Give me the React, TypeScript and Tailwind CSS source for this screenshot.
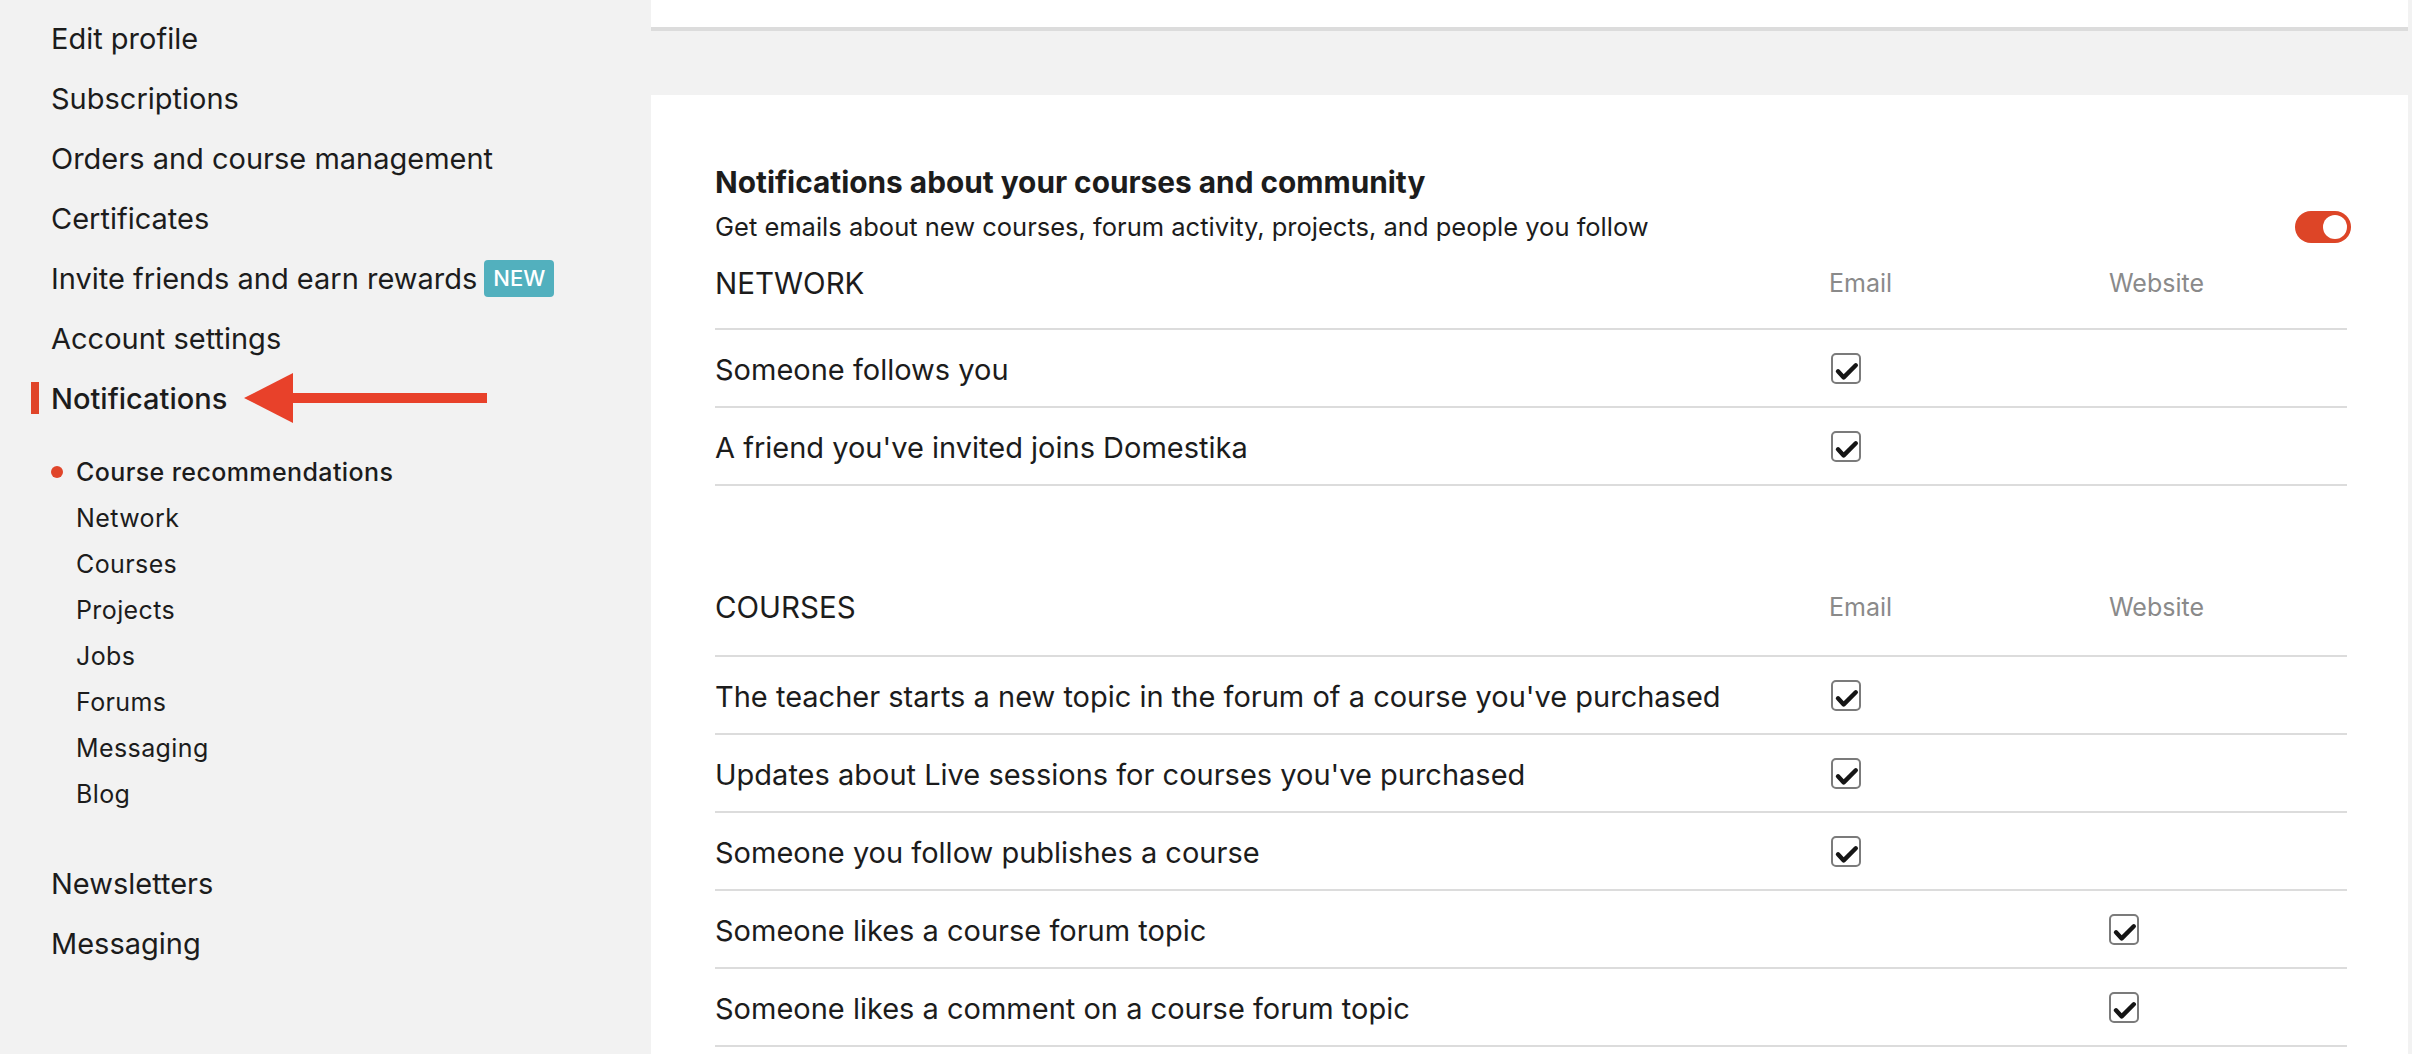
import React from "react";

const menu = [
  "Edit profile",
  "Subscriptions",
  "Orders and course management",
  "Certificates",
  "Invite friends and earn rewards",
  "Account settings",
  "Notifications",
];

const subMenu = [
  "Course recommendations",
  "Network",
  "Courses",
  "Projects",
  "Jobs",
  "Forums",
  "Messaging",
  "Blog",
];

type Row = { label: string; email?: boolean; web?: boolean };

const networkRows: Row[] = [
  { label: "Someone follows you", email: true },
  { label: "A friend you've invited joins Domestika", email: true },
];

const courseRows: Row[] = [
  { label: "The teacher starts a new topic in the forum of a course you've purchased", email: true },
  { label: "Updates about Live sessions for courses you've purchased", email: true },
  { label: "Someone you follow publishes a course", email: true },
  { label: "Someone likes a course forum topic", web: true },
  { label: "Someone likes a comment on a course forum topic", web: true },
];

const Checkbox = () => (
  <span className="block h-[31px] w-[30px] rounded-[5px] border-2 border-[#7b7b7b] bg-white">
    <svg className="h-full w-full" viewBox="0 0 26 27">
      <path
        d="M5 16.3 L10.7 22.4 L22.8 10.3"
        fill="none"
        stroke="#151515"
        strokeWidth="4.4"
        strokeLinecap="round"
        strokeLinejoin="round"
      />
    </svg>
  </span>
);

const Section = ({ title, rows, pb }: { title: string; rows: Row[]; pb: string }) => (
  <div>
    <div className={`grid grid-cols-[1114px_280px_1fr] items-center border-b-2 border-[#dcdcdc] ${pb}`}>
      <span className="text-[29.5px] leading-[34px] text-[#1c1c1c]">{title}</span>
      <span className="text-[25px] leading-[34px] text-[#8a8a8a]">Email</span>
      <span className="text-[25px] leading-[34px] text-[#8a8a8a]">Website</span>
    </div>
    {rows.map((r) => (
      <div
        key={r.label}
        className="grid h-[78px] grid-cols-[1114px_280px_1fr] items-center border-b-2 border-[#dcdcdc]"
      >
        <span className="pt-[4px] text-[29px] leading-[34px] text-[#1c1c1c]">{r.label}</span>
        <span className="pl-[2px]">{r.email && <Checkbox />}</span>
        <span>{r.web && <Checkbox />}</span>
      </div>
    ))}
  </div>
);

export default function App() {
  return (
    <div
      className="flex h-[1054px] w-full overflow-hidden bg-[#f2f2f2]"
      style={{ fontFamily: "Inter, 'Noto Sans', sans-serif" }}
    >
      <aside className="w-[651px] shrink-0 pt-[8px]">
        {menu.map((item) => (
          <div key={item} className="relative flex h-[60px] items-center pl-[51px]">
            {item === "Notifications" && (
              <span className="absolute left-[31px] top-[14px] h-[32px] w-[8px] bg-[#e0452a]" />
            )}
            <span
              className={`text-[29px] leading-none text-[#1c1c1c] ${
                item === "Notifications" ? "font-medium" : ""
              }`}
            >
              {item}
            </span>
            {item.startsWith("Invite") && (
              <span className="ml-[7px] flex h-[37px] w-[70px] items-center justify-center rounded-[4px] bg-[#52b0be] text-[22px] font-medium text-white">
                NEW
              </span>
            )}
            {item === "Notifications" && (
              <svg className="ml-[17px]" width="243" height="50" viewBox="0 0 243 50">
                <polygon points="0,25 49,0 49,50" fill="#e8412a" />
                <rect x="48" y="20" width="195" height="10" fill="#e8412a" />
              </svg>
            )}
          </div>
        ))}

        <div className="mt-[21px]">
          {subMenu.map((s, i) => (
            <div key={s} className="flex h-[46px] items-center pl-[51px]">
              <span
                className={`mr-[13px] h-[12px] w-[12px] rounded-full ${i === 0 ? "bg-[#e0452a]" : ""}`}
              />
              <span
                className={`text-[25px] leading-none tracking-[0.4px] text-[#1c1c1c] ${
                  i === 0 ? "font-medium" : ""
                }`}
              >
                {s}
              </span>
            </div>
          ))}
        </div>

        <div className="mt-[36px]">
          {["Newsletters", "Messaging"].map((item) => (
            <div key={item} className="flex h-[60px] items-center pl-[51px]">
              <span className="text-[29px] leading-none text-[#1c1c1c]">{item}</span>
            </div>
          ))}
        </div>
      </aside>

      <main className="flex min-w-0 flex-1 flex-col pr-[4px]">
        <div className="h-[31px] shrink-0 border-b-4 border-[#dcdcdc] bg-white" />
        <div className="mt-[64px] flex-1 bg-white pl-[64px] pr-[61px] pt-[70px]">
          <h2 className="text-[29.8px] font-bold leading-[34px] text-[#1c1c1c]">
            Notifications about your courses and community
          </h2>
          <div className="mt-[12px] flex items-center justify-between">
            <p className="text-[25.5px] leading-[32px] text-[#1c1c1c]">
              Get emails about new courses, forum activity, projects, and people you follow
            </p>
            <span className="-mr-[4px] flex h-[32px] w-[56px] items-center justify-end rounded-full bg-[#dd4527] pr-[4px]">
              <span className="h-[24px] w-[24px] rounded-full bg-white" />
            </span>
          </div>

          <div className="mt-[23px]">
            <Section title="NETWORK" rows={networkRows} pb="pb-[28px]" />
          </div>
          <div className="mt-[104px]">
            <Section title="COURSES" rows={courseRows} pb="pb-[31px]" />
          </div>
        </div>
      </main>
    </div>
  );
}
